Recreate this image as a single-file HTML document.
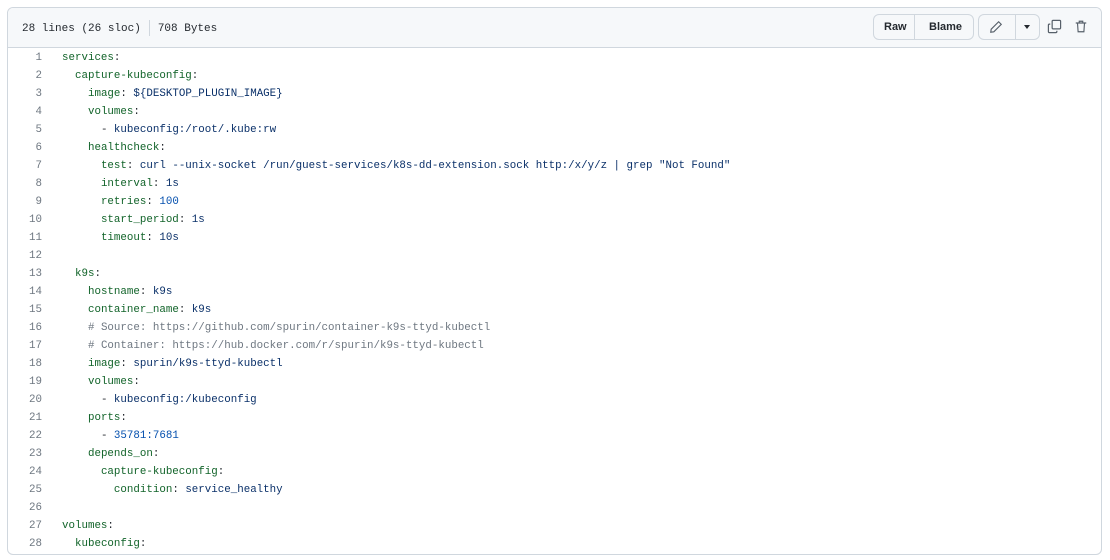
<!DOCTYPE html>
<html><head><style>
body{margin:0;background:#fff;width:1110px;height:560px;overflow:hidden;font-family:"Liberation Sans",sans-serif}
.box{position:absolute;left:7px;top:7px;width:1093px;height:546px;border:1px solid #d0d7de;border-radius:6px;overflow:hidden}
.hdr{height:39px;background:#f6f8fa;border-bottom:1px solid #d0d7de;position:relative}
.info{position:absolute;left:14px;top:12px;font:11px "Liberation Mono",monospace;color:#24292f}
.sep{display:inline-block;width:1px;height:16px;background:#d0d7de;vertical-align:middle;margin:0 8px}
.btn{position:absolute;top:6px;height:26px;border:1px solid #d0d7de;background:#f6f8fa;border-radius:6px;box-sizing:border-box;font:bold 11px "Liberation Sans",sans-serif;color:#24292f;line-height:24px}
.btn span{top:0}
.code{position:absolute;top:41px;left:0;font:10.82px/18px "Liberation Mono",monospace;white-space:pre}
.ln{display:inline-block;width:34px;text-align:right;color:#6e7781;margin-right:20px}
.k{color:#116329}.v{color:#0a3069}.c{color:#6e7781}.t{color:#24292f}
</style></head><body>
<div class="box">
<div class="hdr">
<div class="info">28 lines (26 sloc)<span class="sep"></span>708 Bytes</div>
<div class="btn" style="left:865px;width:101px"><span style="position:absolute;left:10px">Raw</span><span style="position:absolute;left:40px;top:0;bottom:0;border-left:1px solid #d0d7de"></span><span style="position:absolute;left:55px">Blame</span></div>
<div class="btn" style="left:970px;width:62px"><svg style="position:absolute;left:10px;top:5px" width="14" height="14" viewBox="0 0 16 16" fill="none" stroke="#57606a" stroke-width="1.3"><path d="M11 2l3 3-8.5 8.5L2 14l.5-3.5z"/></svg><span style="position:absolute;left:36px;top:0;bottom:0;border-left:1px solid #d0d7de"></span><span style="position:absolute;left:45px;top:10px;border:3.5px solid transparent;border-top:4px solid #24292f"></span></div>
<svg style="position:absolute;left:1039px;top:11px" width="15" height="15" viewBox="0 0 16 16" fill="none" stroke="#57606a" stroke-width="1.3"><rect x="5.5" y="1.5" width="9" height="9" rx="1"/><path d="M3.5 5.5h-1a1 1 0 0 0-1 1v7a1 1 0 0 0 1 1h7a1 1 0 0 0 1-1v-1"/></svg>
<svg style="position:absolute;left:1066px;top:11px" width="14" height="15" viewBox="0 0 16 16" fill="none" stroke="#57606a" stroke-width="1.3"><path d="M2 4h12M6 4V2h4v2M4 4l.7 10h6.6L12 4"/></svg>
</div>
<div class="code"><span class="ln">1</span><span class="k">services</span><span class="t">:</span>
<span class="ln">2</span>  <span class="k">capture-kubeconfig</span><span class="t">:</span>
<span class="ln">3</span>    <span class="k">image</span><span class="t">: </span><span class="v">${DESKTOP_PLUGIN_IMAGE}</span>
<span class="ln">4</span>    <span class="k">volumes</span><span class="t">:</span>
<span class="ln">5</span>      <span class="t">- </span><span class="v">kubeconfig:/root/.kube:rw</span>
<span class="ln">6</span>    <span class="k">healthcheck</span><span class="t">:</span>
<span class="ln">7</span>      <span class="k">test</span><span class="t">: </span><span class="v">curl --unix-socket /run/guest-services/k8s-dd-extension.sock http:/x/y/z | grep "Not Found"</span>
<span class="ln">8</span>      <span class="k">interval</span><span class="t">: </span><span class="v">1s</span>
<span class="ln">9</span>      <span class="k">retries</span><span class="t">: </span><span class="v" style="color:#0550ae">100</span>
<span class="ln">10</span>      <span class="k">start_period</span><span class="t">: </span><span class="v">1s</span>
<span class="ln">11</span>      <span class="k">timeout</span><span class="t">: </span><span class="v">10s</span>
<span class="ln">12</span>
<span class="ln">13</span>  <span class="k">k9s</span><span class="t">:</span>
<span class="ln">14</span>    <span class="k">hostname</span><span class="t">: </span><span class="v">k9s</span>
<span class="ln">15</span>    <span class="k">container_name</span><span class="t">: </span><span class="v">k9s</span>
<span class="ln">16</span>    <span class="c"># Source: https://github.com/spurin/container-k9s-ttyd-kubectl</span>
<span class="ln">17</span>    <span class="c"># Container: https://hub.docker.com/r/spurin/k9s-ttyd-kubectl</span>
<span class="ln">18</span>    <span class="k">image</span><span class="t">: </span><span class="v">spurin/k9s-ttyd-kubectl</span>
<span class="ln">19</span>    <span class="k">volumes</span><span class="t">:</span>
<span class="ln">20</span>      <span class="t">- </span><span class="v">kubeconfig:/kubeconfig</span>
<span class="ln">21</span>    <span class="k">ports</span><span class="t">:</span>
<span class="ln">22</span>      <span class="t">- </span><span class="v" style="color:#0550ae">35781:7681</span>
<span class="ln">23</span>    <span class="k">depends_on</span><span class="t">:</span>
<span class="ln">24</span>      <span class="k">capture-kubeconfig</span><span class="t">:</span>
<span class="ln">25</span>        <span class="k">condition</span><span class="t">: </span><span class="v">service_healthy</span>
<span class="ln">26</span>
<span class="ln">27</span><span class="k">volumes</span><span class="t">:</span>
<span class="ln">28</span>  <span class="k">kubeconfig</span><span class="t">:</span></div>
</div>
</body></html>
